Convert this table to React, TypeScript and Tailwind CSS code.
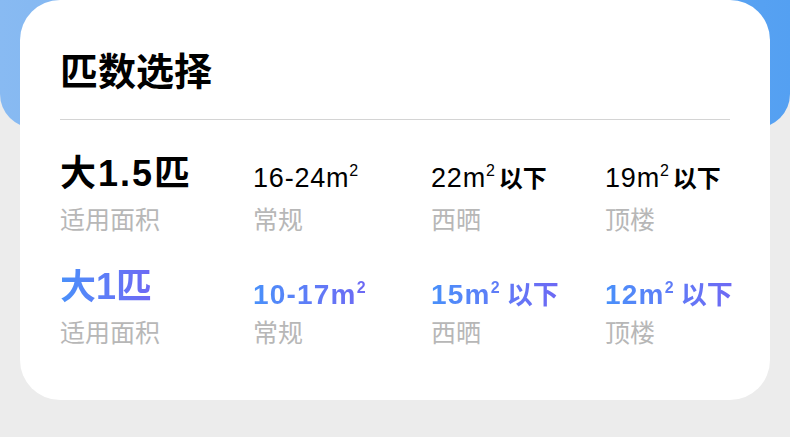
const font = { fontFamily: '"Liberation Sans", "Noto Sans CJK SC", sans-serif' }

interface Cell {
    value: string
    suffix?: string
    label: string
}

const rows: { title: string; cells: Cell[]; active: boolean }[] = [
    {
        title: '大1.5匹',
        active: false,
        cells: [
            { value: '16-24m', label: '常规' },
            { value: '22m', suffix: '以下', label: '西晒' },
            { value: '19m', suffix: '以下', label: '顶楼' },
        ],
    },
    {
        title: '大1匹',
        active: true,
        cells: [
            { value: '10-17m', label: '常规' },
            { value: '15m', suffix: '以下', label: '西晒' },
            { value: '12m', suffix: '以下', label: '顶楼' },
        ],
    },
]

const blueText = 'bg-linear-to-r from-[#4890fa] to-[#6d68f4] bg-clip-text text-transparent'

function Value({ cell, active }: { cell: Cell; active: boolean }) {
    return (
        <span
            className={`inline-block whitespace-nowrap leading-none ${
                active ? `${blueText} text-[28px] font-bold tracking-[1.2px]` : 'text-[27px] font-medium tracking-[0.8px] text-black'
            }`}
        >
            {cell.value}
            <span className="align-[11px] text-[16px]">2</span>
            {cell.suffix ? (
                <span className={`font-bold tracking-normal ${active ? 'ml-[6px] text-[26px]' : 'ml-[3px] text-[24px]'}`}>
                    {cell.suffix}
                </span>
            ) : null}
        </span>
    )
}

export default function App() {
    return (
        <div className="relative h-[437px] w-[790px] overflow-hidden bg-[#ececec]" style={font}>
            <div className="absolute left-0 right-0 top-0 h-[128px] rounded-b-[34px] bg-linear-to-r from-[#88baf2] to-[#54a0f2]" />
            <div className="relative mx-[20px] flex h-[400px] flex-col rounded-[40px] bg-white px-[40px] pt-[50px]">
                <h1
                    className="text-[38px] font-bold leading-[38px] text-black"
                    style={{ fontFamily: '"Noto Sans CJK SC", sans-serif' }}
                >
                    匹数选择
                </h1>
                <div className="mt-[31px] h-px bg-[#d4d4d4]" />
                <div className="mt-[36px] flex flex-col gap-[35px]">
                    {rows.map((row) => (
                        <div
                            key={row.title}
                            className="grid grid-cols-[193px_178px_174px_1fr] items-end"
                        >
                            <div className="flex flex-col">
                                <span
                                    className={`self-start whitespace-nowrap text-[36px] font-bold leading-none ${
                                        row.active ? blueText : 'tracking-[2px] text-black'
                                    }`}
                                >
                                    {row.title}
                                </span>
                                <span className="mt-[14px] text-[25px] leading-[28px] text-[#b7b7b7]">
                                    适用面积
                                </span>
                            </div>
                            {row.cells.map((cell) => (
                                <div key={cell.label} className="flex flex-col">
                                    <div>
                                        <Value cell={cell} active={row.active} />
                                    </div>
                                    <span
                                        className={`${
                                            row.active ? 'mt-[8px]' : 'mt-[12px]'
                                        } text-[25px] leading-[28px] text-[#b7b7b7]`}
                                    >
                                        {cell.label}
                                    </span>
                                </div>
                            ))}
                        </div>
                    ))}
                </div>
            </div>
        </div>
    )
}
